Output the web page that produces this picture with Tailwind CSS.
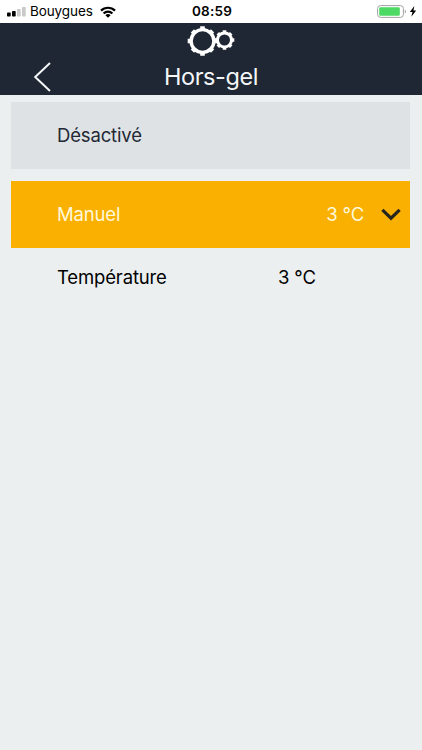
<!DOCTYPE html>
<html lang="fr">
<head>
    <meta charset="UTF-8">
    <meta name="viewport" content="width=device-width, initial-scale=1.0">
    <title>Hors-gel</title>

    <!-- Tailwind CSS -->
    <script src="https://cdn.jsdelivr.net/npm/@tailwindcss/browser@4"></script>
</head>
<body class="bg-[#ebeff0] min-h-screen font-['Inter',sans-serif] text-black">
    <!-- Status bar -->
    <div class="h-[23px] bg-white grid grid-cols-[1fr_auto_1fr] items-center pl-[7px] pr-[5px]">
        <div class="flex items-center pt-px">
            <svg class="w-[19px] h-[10px]" viewBox="0 0 19 10">
                <rect x="0" y="5.5" width="3.7" height="4" rx="0.8" fill="#000"/>
                <rect x="5" y="4" width="3.7" height="5.5" rx="0.8" fill="#000"/>
                <rect x="10" y="2" width="3.7" height="7.5" rx="0.8" fill="#c9c9c9"/>
                <rect x="15" y="0" width="3.7" height="9.5" rx="0.8" fill="#c9c9c9"/>
            </svg>
            <span class="ml-[4px] text-[13.5px] leading-none tracking-[-0.1px]">Bouygues</span>
            <svg class="ml-[7px] w-4 h-[12px]" viewBox="0 0 16 12" fill="none" stroke="#000" stroke-width="2.2">
                <path d="M1 4.6a10 10 0 0 1 14 0"/>
                <path d="M3.6 7.4a6.2 6.2 0 0 1 8.8 0"/>
                <path d="M8 11.8L5.4 9.2a3.7 3.7 0 0 1 5.2 0z" fill="#000" stroke="none"/>
            </svg>
        </div>
        <span class="pt-px text-[13.5px] leading-none font-semibold tracking-[0.2px]">08:59</span>
        <div class="flex items-center justify-end">
            <svg class="w-[30px] h-[13px]" viewBox="0 0 30 13">
                <rect x="0.6" y="0.6" width="25.8" height="11.8" rx="3" fill="#fff" stroke="#a0a0a0"/>
                <rect x="2.2" y="2.2" width="20.6" height="8.6" rx="1.3" fill="#4cd964"/>
                <path d="M27.8 4.5v4c1.5-.6 1.5-3.4 0-4z" fill="#a0a0a0"/>
            </svg>
            <svg class="ml-[2px] w-2 h-[11px]" viewBox="0 0 8 11"><path d="M5.3 0L.8 6.1h2.7L2.3 10.8 7.2 4.6H4.5z"/></svg>
        </div>
    </div>

    <!-- Header -->
    <header class="h-[72px] bg-[#1e2733] text-[#f4f6f8] grid grid-cols-[1fr_auto_1fr]">
        <button class="self-end justify-self-start ml-[33px] mb-[2px]">
            <svg class="block w-[19px] h-[32px]" viewBox="0 0 19 32" fill="none" stroke="currentColor" stroke-width="2">
                <path d="M17 2L2.2 16 17 30"/>
            </svg>
        </button>
        <div class="flex flex-col items-center">
            <svg class="mt-[2px] w-[50px] h-[32px]" viewBox="0 0 50 32" fill="none" stroke="#fff">
                <!-- Large gear -->
                <circle cx="16.5" cy="16" r="11.4" stroke-width="3.4"/>
                <path stroke-width="4.6" d="M16.5 1.2v3.8M16.5 27v3.8M1.7 16h3.8M27.5 16h3.8M6.4 5.9l2.4 2.4M24.2 23.7l2.4 2.4M6.4 26.1l2.4-2.4M24.2 8.3l2.4-2.4"/>
                <!-- Small gear -->
                <circle cx="38.5" cy="15" r="7" stroke-width="3"/>
                <path stroke-width="3.6" d="M38.5 5.2v2.4M38.5 22.4v2.4M28.7 15h2.4M45.9 15h2.4M31.8 8.3l1.5 1.5M43.7 20.2l1.5 1.5M31.8 21.7l1.5-1.5M43.7 9.8l1.5-1.5"/>
            </svg>
            <h1 class="mt-[5px] text-[23.5px] leading-[30px] tracking-[-0.4px] whitespace-nowrap">Hors-gel</h1>
        </div>
    </header>

    <!-- Modes -->
    <main class="pl-[11px] pr-3 pt-[7px] text-[18.5px] leading-6 tracking-[-0.15px]">
        <div class="h-[67px] bg-[#dee2e5] text-[#232834] flex items-center pl-[46px] pb-[2px]">Désactivé</div>

        <div class="mt-3 h-[67px] bg-[#f9b000] text-[#fff8dc] flex items-center pl-[46px] pr-[9px]">
            <span class="pb-[2px]">Manuel</span>
            <span class="ml-auto pb-[2px]">3 °C</span>
            <svg class="ml-[17px] w-[20px] h-[13px]" viewBox="0 0 20 13" fill="none" stroke="#26261f" stroke-width="3.2">
                <path d="M1.4 1.8L10 10.2l8.6-8.4"/>
            </svg>
        </div>

        <div class="mt-[17px] flex pl-[46px]">
            <span class="w-[221px]">Température</span>
            <span>3 °C</span>
        </div>
    </main>
</body>
</html>
